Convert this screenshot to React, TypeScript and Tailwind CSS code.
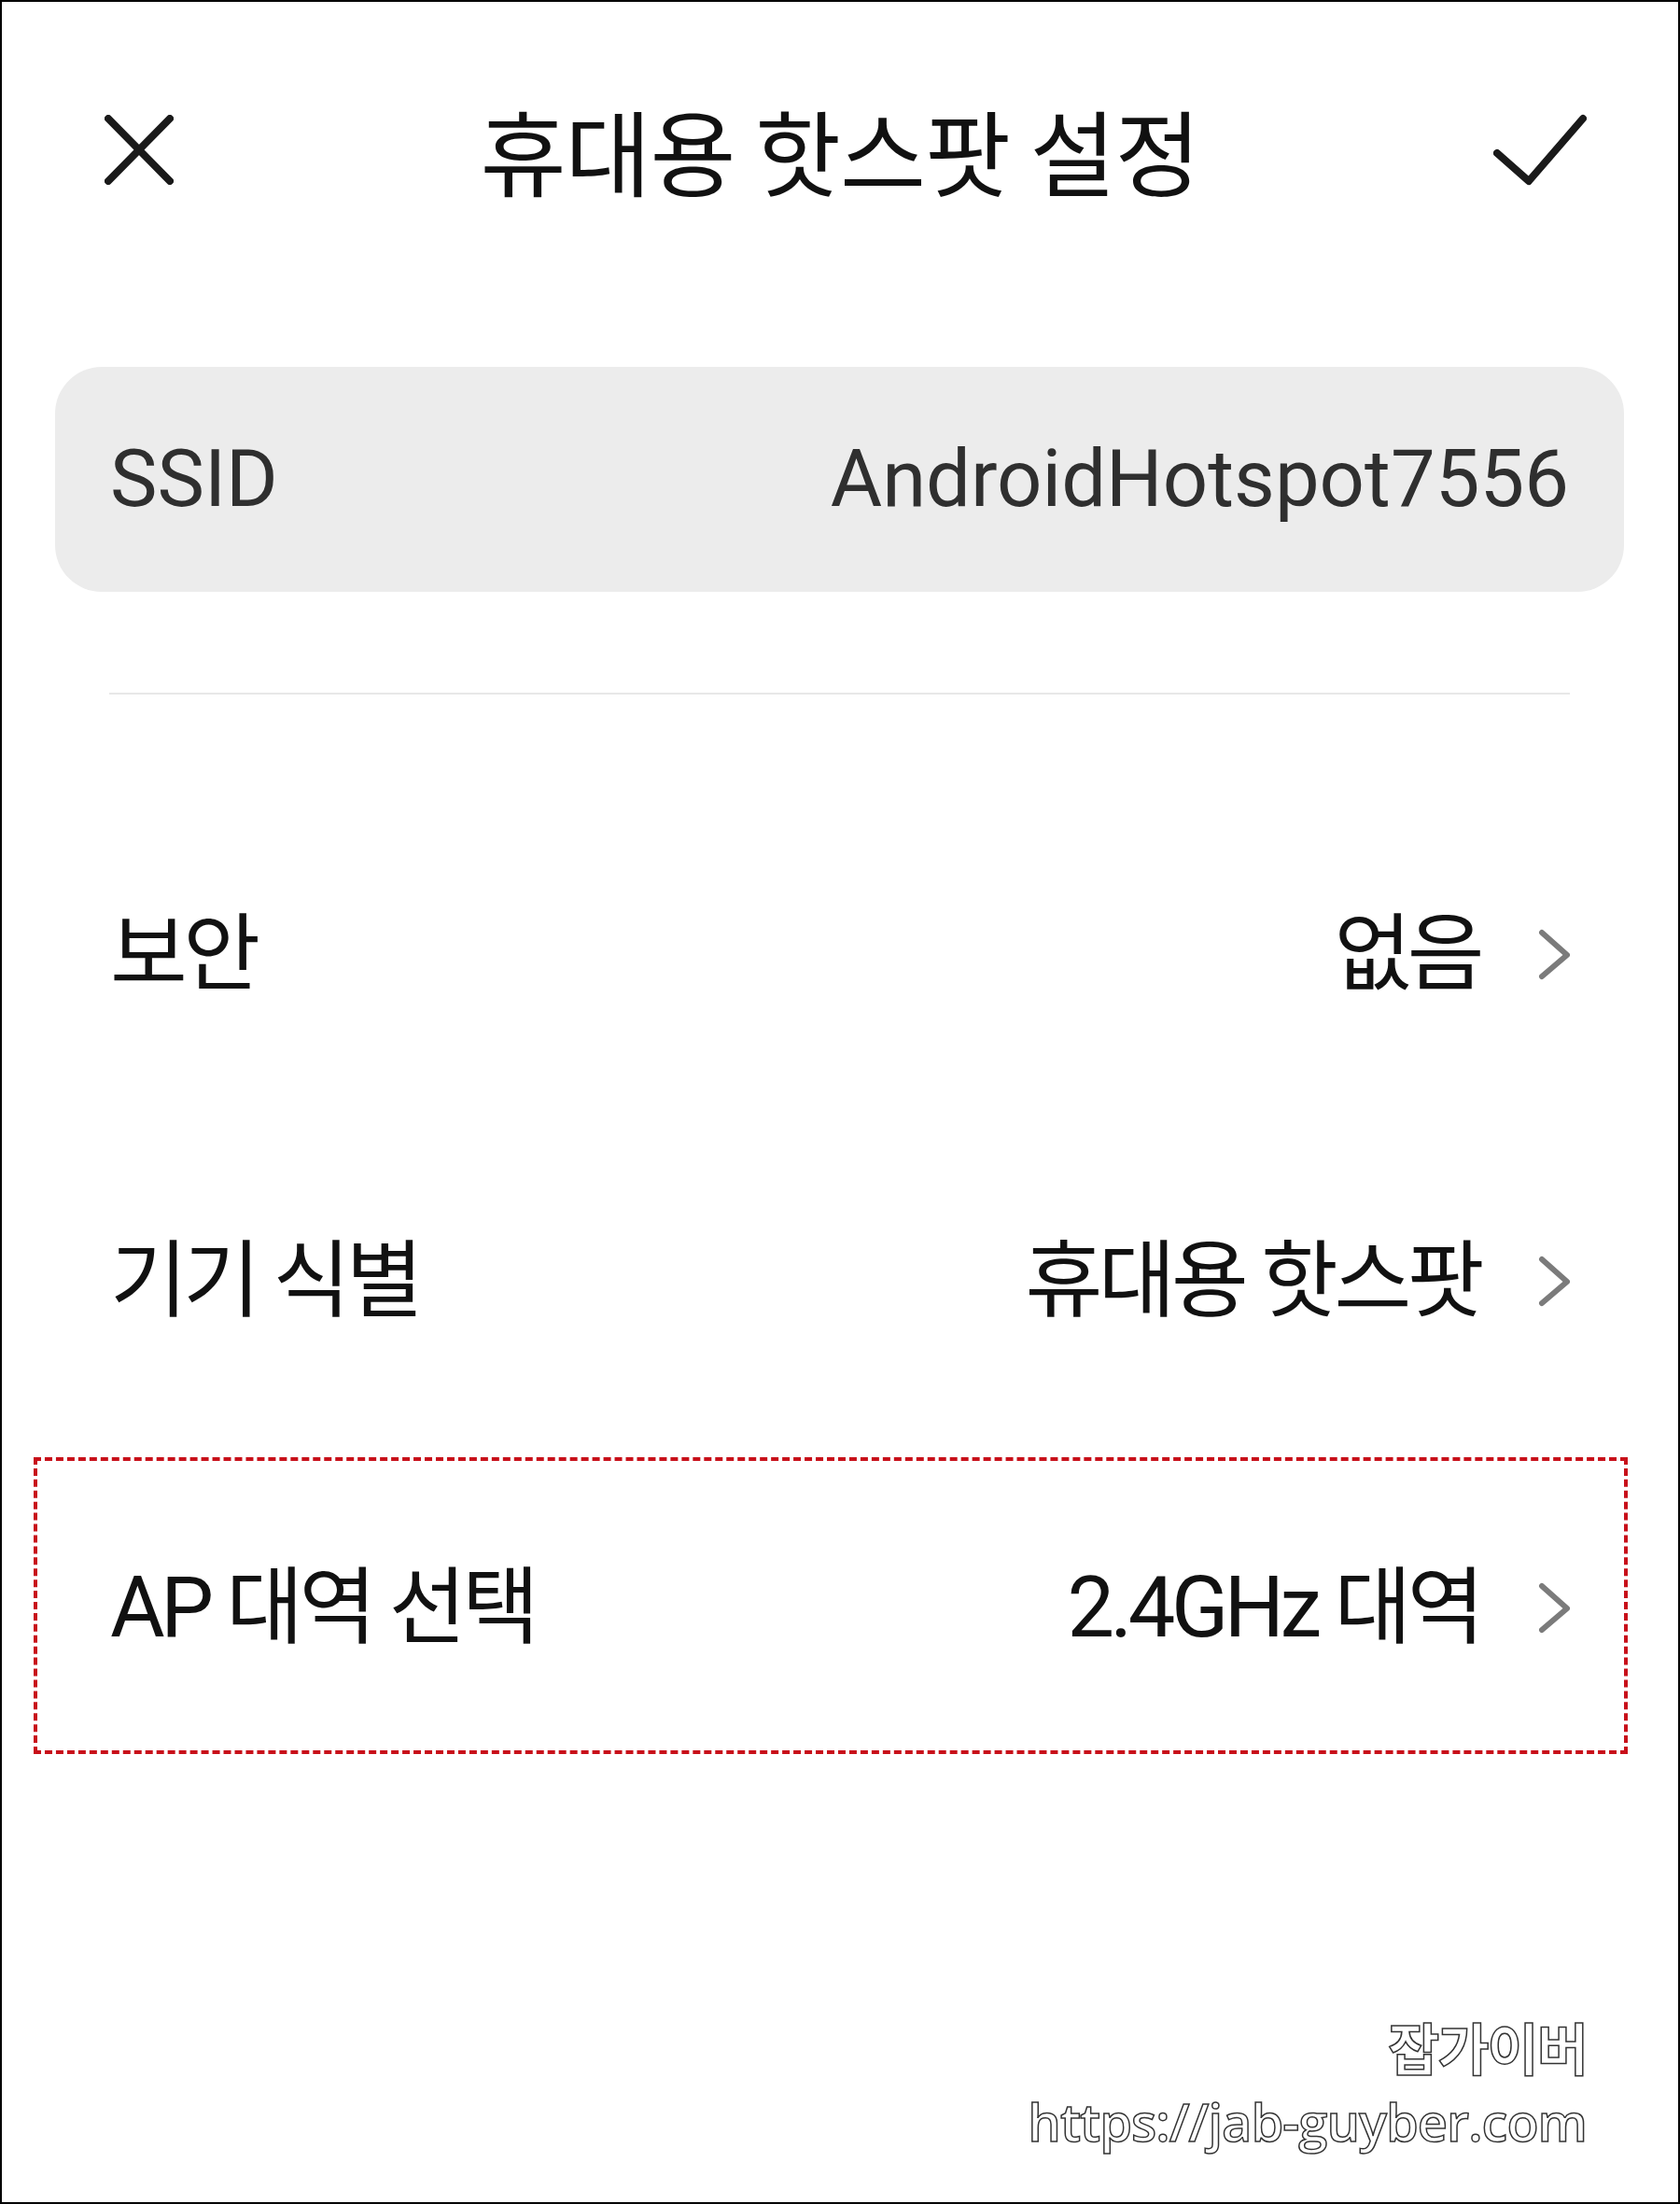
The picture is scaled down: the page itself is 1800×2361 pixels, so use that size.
import React from "react";

const Chevron = () => (
  <svg width="36" height="58" viewBox="0 0 36 58" className="shrink-0">
    <polyline points="4,5 31,29 4,52" fill="none" stroke="#7b7b7b" strokeWidth="6" strokeLinecap="round" strokeLinejoin="round" />
  </svg>
);

const Row = ({ label, value, boxed }: { label: string; value: string; boxed?: boolean }) => (
  <div className="relative flex h-[350px] items-center justify-between pl-[116px] pr-[114px]">
    <span className="text-[90px] leading-none tracking-[-4.5px] text-[#111]">{label}</span>
    <div className="flex items-center gap-[62px]">
      <span className="text-[90px] leading-none tracking-[-4.5px] text-[#111]">{value}</span>
      <Chevron />
    </div>
    {boxed && (
      <div className="pointer-events-none absolute left-[34px] right-[54px] top-[13px] bottom-[19px] border-4 border-dashed border-[#c8101a]" />
    )}
  </div>
);

export default function App() {
  return (
    <div
      className="relative box-border flex h-[2361px] w-[1800px] flex-col border-2 border-black bg-white"
      style={{ fontFamily: "Roboto, 'Noto Sans CJK KR', sans-serif" }}
    >
      {/* Header */}
      <div className="grid h-[316px] grid-cols-[1fr_auto_1fr] items-center">
        <div className="pl-[110px]">
          <svg width="74" height="75" viewBox="0 0 74 75">
            <line x1="4" y1="4" x2="70" y2="71" stroke="#1a1a1a" strokeWidth="8" strokeLinecap="round" />
            <line x1="70" y1="4" x2="4" y2="71" stroke="#1a1a1a" strokeWidth="8" strokeLinecap="round" />
          </svg>
        </div>
        <h1 className="text-[100px] font-normal leading-none tracking-[-1px] text-[#111]" style={{ fontFamily: "'Noto Sans CJK KR', sans-serif" }}>
          휴대용 핫스팟 설정
        </h1>
        <div className="flex justify-end pr-[98px]">
          <svg width="100" height="77" viewBox="0 0 100 77">
            <polyline points="4,42 38,72 96,5" fill="none" stroke="#1a1a1a" strokeWidth="8" strokeLinecap="round" strokeLinejoin="round" />
          </svg>
        </div>
      </div>

      {/* SSID card */}
      <div className="ml-[57px] mr-[58px] mt-[75px] flex h-[241px] items-center justify-between rounded-[50px] bg-[#ececec] px-[59px]">
        <span className="text-[85px] leading-none text-[#2f2f2f]">SSID</span>
        <span className="text-[85px] leading-none text-[#2f2f2f]">AndroidHotspot7556</span>
      </div>

      {/* Divider */}
      <div className="ml-[115px] mr-[116px] mt-[108px] h-[2px] bg-[#e8e8e8]" />

      {/* Rows */}
      <div className="mt-[104px] flex flex-col">
        <Row label="보안" value="없음" />
        <Row label="기기 식별" value="휴대용 핫스팟" />
        <Row label="AP 대역 선택" value="2.4GHz 대역" boxed />
      </div>

      {/* Watermark */}
      <div className="pointer-events-none absolute right-[98px] top-[2160px] flex flex-col items-end">
        <span
          className="text-[60px] font-bold leading-none tracking-[-2px] text-white [-webkit-text-stroke:1.5px_#333]"
          style={{ fontFamily: "'Noto Sans CJK KR', sans-serif" }}
        >
          잡가이버
        </span>
        <span
          className="mt-[22px] text-[56px] font-semibold leading-none tracking-[-1px] text-white [-webkit-text-stroke:1.5px_#333]"
          style={{ fontFamily: "'Open Sans', sans-serif" }}
        >
          https://jab-guyber.com
        </span>
      </div>
    </div>
  );
}
